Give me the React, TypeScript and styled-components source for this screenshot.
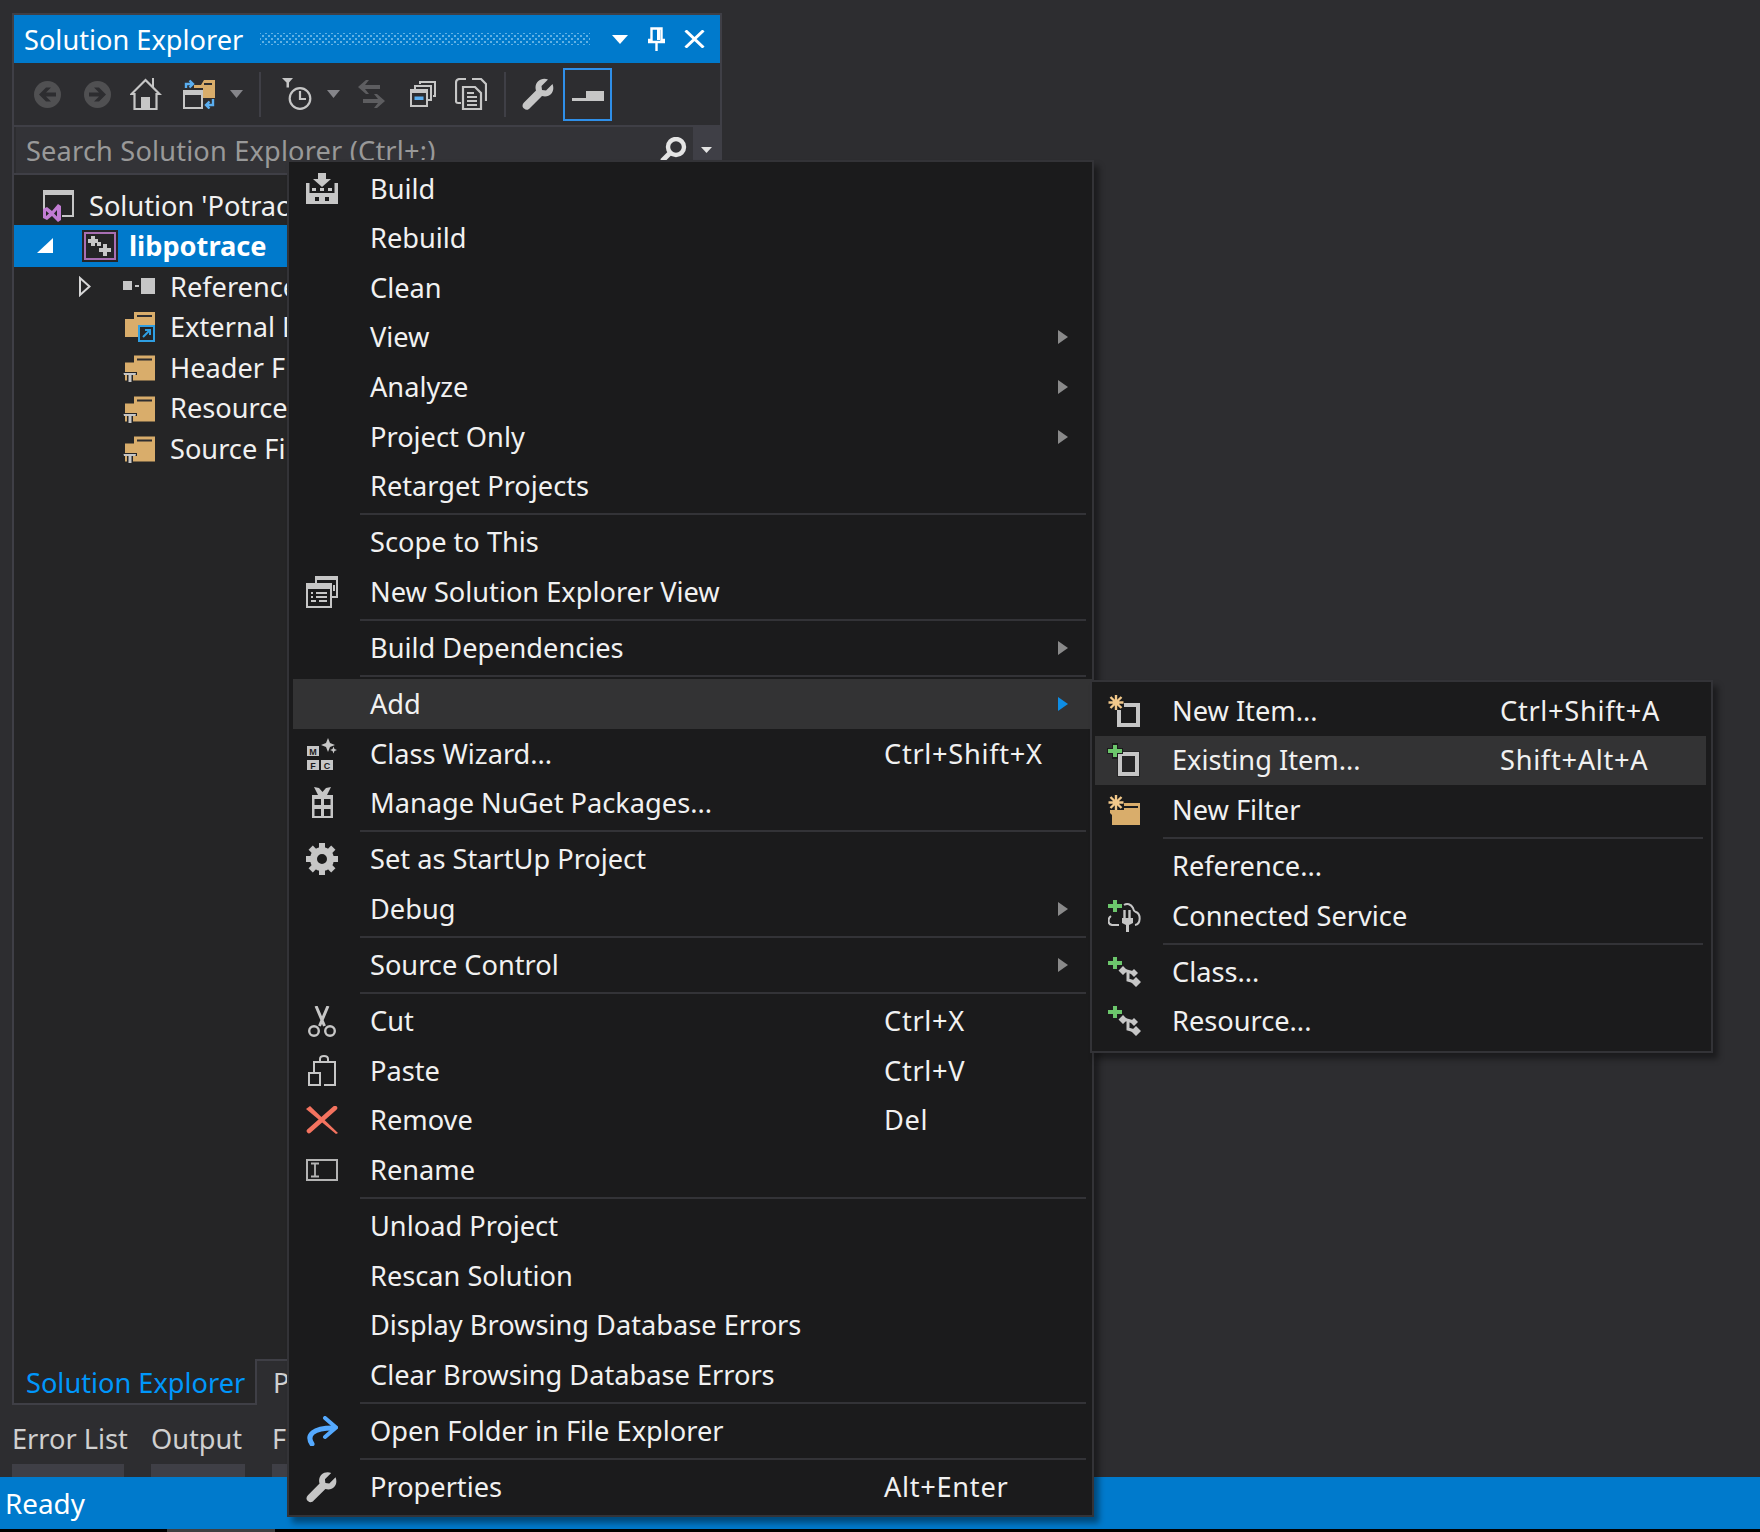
import React from "react";
import styled, { createGlobalStyle } from "styled-components";

const FONT = `"Noto Sans", "Open Sans", "Liberation Sans", sans-serif`;
const GRAY = "#c6c6c6";
const DARK = "#1b1b1c";
const FOLDER = "#d9ad6b";
const GREEN = "#6cc66c";
const STAR = "#f3c98b";

const Global = createGlobalStyle`
  html, body { margin: 0; padding: 0; background: #2d2d30; }
  * { box-sizing: border-box; }
`;

const Page = styled.div`
  position: relative;
  width: 1760px;
  height: 1532px;
  display: flex;
  flex-direction: column;
  padding-top: 13px;
  overflow: hidden;
  background: #2d2d30;
  font-family: ${FONT};
  font-size: 27.2px;
  color: #f1f1f1;
`;

const Panel = styled.section`
  width: 710px;
  height: 1348px;
  margin-left: 12px;
  display: flex;
  flex-direction: column;
  border: 2px solid #3f3f46;
  border-bottom: none;
  background: #2d2d30;
`;

const TitleBar = styled.header`
  height: 48px;
  flex: none;
  display: flex;
  align-items: center;
  padding-left: 10px;
  background: #007acc;
  color: #ffffff;
`;

const TitleText = styled.span`
  width: 219px;
  flex: none;
  line-height: 49px;
  white-space: nowrap;
`;

const Grip = styled.div`
  width: 330px;
  height: 12px;
  margin-left: 17px;
  background-image:
    radial-gradient(circle, #62b1e4 1px, transparent 1.3px),
    radial-gradient(circle, #62b1e4 1px, transparent 1.3px);
  background-size: 6px 6px;
  background-position: 0 0, 3px 3px;
`;

const Glyph = styled.svg<{ $ml?: number }>`
  display: block;
  flex: none;
  margin-left: ${(p) => p.$ml ?? 0}px;
`;

const Toolbar = styled.div`
  height: 62px;
  flex: none;
  display: flex;
  align-items: center;
  padding-left: 20px;
`;

const ToolSep = styled.div<{ $ml: number }>`
  width: 2px;
  height: 45px;
  margin-left: ${(p) => p.$ml}px;
  background: #3f3f46;
`;

const ActiveTool = styled.div`
  width: 49px;
  height: 53px;
  margin-left: 8px;
  display: flex;
  align-items: center;
  justify-content: center;
  padding-top: 3px;
  border: 2px solid #2f8fe8;
`;

const SearchRow = styled.div`
  height: 50px;
  flex: none;
  display: flex;
  border-top: 2px solid #3f3f46;
  border-bottom: 2px solid #3f3f46;
`;

const SearchField = styled.div`
  flex: 1;
  display: flex;
  align-items: center;
  justify-content: space-between;
  padding: 0 5px 0 10px;
  margin-left: 2px;
  background: #333337;
  color: #999999;
  letter-spacing: 0.17px;
  white-space: nowrap;
`;

const SearchDrop = styled.div`
  width: 27px;
  display: flex;
  justify-content: center;
  padding-top: 20px;
  background: #3f3f46;
`;

const Tree = styled.div`
  flex: 1;
  padding-top: 10px;
  background: #252526;
  border-bottom: 2px solid #3f3f46;
`;

const TreeRow = styled.div<{ $indent: number; $selected?: boolean }>`
  height: ${(p) => (p.$selected ? 42.5 : 40.5)}px;
  margin: ${(p) => (p.$selected ? "-1px 0" : "0")};
  display: flex;
  align-items: center;
  padding-left: ${(p) => p.$indent}px;
  background: ${(p) => (p.$selected ? "#007acc" : "transparent")};
  color: ${(p) => (p.$selected ? "#ffffff" : "#f1f1f1")};
  font-weight: ${(p) => (p.$selected ? 700 : 400)};
`;

const TreeLabel = styled.span`
  white-space: nowrap;
`;

const Expander = styled.div`
  width: 45px;
  flex: none;
`;

const TreeIcon = styled.div`
  width: 36px;
  flex: none;
  margin-right: 11px;
`;

const TabStrip = styled.div`
  height: 46px;
  flex: none;
  display: flex;
  margin-left: 12px;
`;

const ActiveTab = styled.div`
  width: 245px;
  height: 46px;
  margin-top: -2px;
  padding-left: 12px;
  line-height: 47px;
  background: #252526;
  color: #0097fb;
  border: 2px solid #3f3f46;
  border-top: none;
  white-space: nowrap;
`;

const IdleTab = styled.div`
  padding-left: 16px;
  line-height: 44px;
  color: #d0d0d0;
`;

const ToolTabs = styled.nav`
  height: 70px;
  flex: none;
  display: flex;
  gap: 27px;
  padding-left: 12px;
`;

const ToolTab = styled.div<{ $w: number }>`
  width: ${(p) => p.$w}px;
  display: flex;
  flex-direction: column;
  justify-content: flex-end;
  color: #d0d0d0;
  white-space: nowrap;
  line-height: 34px;
  &::after {
    content: "";
    display: block;
    height: 13px;
    margin-top: 8px;
    background: #3f3f46;
  }
`;

const StatusBar = styled.footer`
  height: 52px;
  flex: none;
  padding-left: 5px;
  line-height: 52px;
  font-size: 27.8px;
  background: #007acc;
  color: #ffffff;
`;

const BottomEdge = styled.div`
  height: 3px;
  flex: none;
  padding-left: 167px;
  background: #000000;
  &::before {
    content: "";
    display: block;
    width: 108px;
    height: 3px;
    background: #3f3f40;
  }
`;

const Menu = styled.div<{ $left: number; $top: number; $width: number; $pad: string; $z: number }>`
  position: absolute;
  left: ${(p) => p.$left}px;
  top: ${(p) => p.$top}px;
  width: ${(p) => p.$width}px;
  z-index: ${(p) => p.$z};
  padding: ${(p) => p.$pad};
  background: ${DARK};
  border: 2px solid #333337;
  box-shadow: 5px 6px 6px rgba(0, 0, 0, 0.4);
`;

const Row = styled.div<{ $textW: number; $active?: boolean }>`
  display: grid;
  grid-template-columns: 58px 19px ${(p) => p.$textW}px 1fr;
  height: 49.57px;
  padding-bottom: 1px;
  align-items: center;
  background: ${(p) => (p.$active ? "#333334" : "transparent")};
  white-space: nowrap;
`;

const RowIcon = styled.div`
  grid-column: 1;
  display: flex;
  justify-content: center;
  margin-top: 1px;
`;

const RowLabel = styled.span`
  grid-column: 3;
`;

const RowShortcut = styled.span`
  grid-column: 4;
  letter-spacing: 0.7px;
`;

const SubArrow = styled.span<{ $on?: boolean }>`
  grid-column: 4;
  justify-self: end;
  width: 0;
  height: 0;
  margin: 1px 24px 0 0;
  border-top: 7.5px solid transparent;
  border-bottom: 7.5px solid transparent;
  border-left: 10px solid ${(p) => (p.$on ? "#0e8de4" : "#8a8a8a")};
`;

const Separator = styled.div<{ $l: number; $r: number }>`
  height: 2px;
  margin: 2.3px ${(p) => p.$r}px 2.3px ${(p) => p.$l}px;
  background: #333337;
`;

/* ---------- toolbar drawings ---------- */
const NavCircle = ({ dir, ml }: { dir: "l" | "r"; ml?: number }) => (
  <Glyph $ml={ml} width={27} height={27} viewBox="0 0 27 27">
    <circle cx="13.5" cy="13.5" r="13.5" fill="#505052" />
    <path
      transform={dir === "r" ? "rotate(180 13.5 13.5)" : undefined}
      d="M5 13.5 L12 6.5 h5 l-5 5 h10 v4 h-10 l5 5 h-5z"
      fill="#2d2d30"
    />
  </Glyph>
);

const HomeTool = ({ ml }: { ml: number }) => (
  <Glyph $ml={ml} width={32} height={32} viewBox="0 0 32 32">
    <path d="M15.5 2 L29.5 16 H26.5 V31 H4.5 V16 H1.5 Z" fill="none" stroke={GRAY} strokeWidth="2.2" />
    <path d="M23 10 V0" stroke={GRAY} strokeWidth="2" />
    <rect x="11" y="19" width="9" height="12" fill={GRAY} />
  </Glyph>
);

const SyncTool = ({ ml }: { ml: number }) => (
  <Glyph $ml={ml} width={32} height={30} viewBox="0 0 32 30">
    <path d="M11 6 H18 L21 1 H32 V19 H20 V9 H11 Z" fill={FOLDER} />
    <rect x="21" y="4" width="8" height="2" fill="#2d2d30" />
    <rect x="1" y="12" width="18" height="17" fill="#2d2d30" stroke={GRAY} strokeWidth="2" />
    <rect x="0" y="11" width="20" height="5" fill={GRAY} />
    <path d="M3 9 V5 H9 M6.5 1.5 L10 5 L6.5 8.5" fill="none" stroke="#5aaef0" strokeWidth="2.4" />
    <path d="M30 20 V26 H24 M26.5 22.5 L23 26 L26.5 29.5" fill="none" stroke="#5aaef0" strokeWidth="2.4" />
  </Glyph>
);

const DropTool = ({ ml }: { ml: number }) => (
  <Glyph $ml={ml} width={13} height={8} viewBox="0 0 13 8">
    <path d="M0 0 H13 L6.5 8 Z" fill="#85858a" />
  </Glyph>
);

const HistoryTool = ({ ml }: { ml: number }) => (
  <Glyph $ml={ml} width={30} height={32} viewBox="0 0 30 32">
    <path d="M0 0 H11 L7 4.5 V9.5 H4.5 V4.5 Z" fill={GRAY} />
    <circle cx="18" cy="20.5" r="10.3" fill="none" stroke={GRAY} strokeWidth="2.2" />
    <path d="M18 13 V21 H24" fill="none" stroke={GRAY} strokeWidth="2.2" />
  </Glyph>
);

const SwapTool = ({ ml }: { ml: number }) => (
  <Glyph $ml={ml} width={27} height={28} viewBox="0 0 27 28">
    <path d="M0 7 L8 0 h3 L7 5 H22 V9 H7 L11 14 H8 Z" fill="#5d5d60" />
    <path d="M27 21 L19 14 h-3 L20 19 H5 V23 H20 L16 28 H19 Z" fill="#5d5d60" />
  </Glyph>
);

const CollapseTool = ({ ml }: { ml: number }) => (
  <Glyph $ml={ml} width={26} height={26} viewBox="0 0 26 26">
    <path d="M10 3 V1 H25 V15 H23" fill="none" stroke={GRAY} strokeWidth="2" />
    <path d="M5 8 V5 H21 V19 H18" fill="none" stroke={GRAY} strokeWidth="2" />
    <rect x="1" y="9" width="16" height="16" fill="#2d2d30" stroke={GRAY} strokeWidth="2" />
    <rect x="0" y="8" width="18" height="4" fill={GRAY} />
    <rect x="4.5" y="15.5" width="9" height="3.5" fill="#5aaef0" />
  </Glyph>
);

const CopyTool = ({ ml }: { ml: number }) => (
  <Glyph $ml={ml} width={32} height={32} viewBox="0 0 32 32">
    <path d="M6 25 H3 Q1 25 1 23 V5 Q1 1 5 1 H11 M17 1 H26 L31 6 V23" fill="none" stroke={GRAY} strokeWidth="2.2" />
    <path d="M8 9 H20 L26 15 V31 H8 Z" fill="#2d2d30" stroke={GRAY} strokeWidth="2.2" />
    <path d="M12 15 H19 M12 19 H22 M12 23 H22 M12 27 H22" stroke={GRAY} strokeWidth="2" />
  </Glyph>
);

const WRENCH =
  "M30.5 6 L24 12.5 L20 12 L19.5 8 L26 1.5 C20 -1 13.5 3 13.5 9.5 C13.5 10.5 13.7 11.5 14 12.5 L2 24.5 C0 26.5 0 29 2 30.5 C4 32.5 6.5 32 8 30 L20 18 C21 18.3 22 18.5 23 18.5 C29.5 18.5 33 12 30.5 6 Z";

const WrenchTool = ({ ml }: { ml: number }) => (
  <Glyph $ml={ml} width={33} height={32} viewBox="0 0 33 32">
    <path d={WRENCH} fill={GRAY} />
  </Glyph>
);

const PinTool = () => (
  <Glyph width={32} height={10} viewBox="0 0 32 10">
    <rect x="0" y="7" width="15" height="3" fill={GRAY} />
    <rect x="14" y="0" width="18" height="10" fill={GRAY} />
  </Glyph>
);

/* ---------- title bar / search ---------- */
const TitleDrop = () => (
  <Glyph $ml={22} width={16} height={9} viewBox="0 0 16 9">
    <path d="M0 0 H16 L8 9 Z" fill="#ffffff" />
  </Glyph>
);

const TitlePin = () => (
  <Glyph $ml={20} width={17} height={24} viewBox="0 0 17 24">
    <path d="M3.5 1.5 H13.5 V13 H16 V15 H1 V13 H3.5 Z" fill="none" stroke="#fff" strokeWidth="2.4" />
    <path d="M8.5 15 V24" stroke="#fff" strokeWidth="2.4" />
    <rect x="9" y="2" width="3" height="11" fill="#fff" />
  </Glyph>
);

const TitleClose = () => (
  <Glyph $ml={19} width={21} height={18} viewBox="0 0 21 18">
    <path d="M1.5 0.5 L19.5 17.5 M19.5 0.5 L1.5 17.5" stroke="#fff" strokeWidth="3" />
  </Glyph>
);

const SearchGlass = () => (
  <Glyph width={28} height={26} viewBox="0 0 28 26">
    <circle cx="16" cy="10" r="8" fill="none" stroke="#e4e4e4" strokeWidth="4.4" />
    <path d="M10 16 L2 24" stroke="#e4e4e4" strokeWidth="5" />
  </Glyph>
);

const SearchArrow = () => (
  <Glyph width={11} height={6} viewBox="0 0 11 6">
    <path d="M0 0 H11 L5.5 6 Z" fill="#e4e4e4" />
  </Glyph>
);

/* ---------- tree drawings ---------- */
const SolutionIcon = () => (
  <Glyph width={33} height={33} viewBox="0 0 33 33">
    <path d="M2 20 V2 H31 V27 H20" fill="none" stroke={GRAY} strokeWidth="2" />
    <rect x="1" y="1" width="31" height="5" fill={GRAY} />
    <path
      d="M1 20 L5 18 L10 22 L16 15 L19 17 V31 L16 33 L10 27 L5 31 L1 29 Z M4 22 V27 L7 24.5 Z M15 21 L12 24.5 L15 27.5 Z"
      fill="#c27dd4"
      fillRule="evenodd"
    />
  </Glyph>
);

const ProjectIcon = () => (
  <Glyph width={36} height={32} viewBox="0 0 36 32">
    <rect width="36" height="32" fill="#252526" />
    <rect x="3" y="3" width="30" height="26" fill="none" stroke="#a86fb3" strokeWidth="2" />
    <path
      d="M9 6 h4 v3 h3 v4 h-3 v3 h-4 v-3 h-3 v-4 h3z M21 14 h4 v4 h4 v4 h-4 v4 h-4 v-4 h-4 v-4 h4z"
      fill="#c8c8c8"
    />
    <rect x="15" y="12" width="4" height="4" fill="#c8c8c8" />
  </Glyph>
);

const SolidExpander = () => (
  <Glyph width={16} height={15} viewBox="0 0 16 15">
    <path d="M16 0 V15 H0 Z" fill="#ffffff" />
  </Glyph>
);

const OpenExpander = () => (
  <Glyph $ml={1} width={12} height={21} viewBox="0 0 12 21">
    <path d="M1 2 L10.5 10.5 L1 19 Z" fill="none" stroke="#d6d6d6" strokeWidth="2" />
  </Glyph>
);

const ReferenceIcon = () => (
  <Glyph width={32} height={16} viewBox="0 0 32 16">
    <rect x="0" y="3" width="9" height="9" fill={GRAY} />
    <rect x="12" y="7" width="4" height="2" fill={GRAY} />
    <rect x="18" y="0" width="14" height="16" fill={GRAY} />
  </Glyph>
);

const FolderShape = () => (
  <>
    <path d="M0 7 H9 V0 H30 V25 H0 Z" fill={FOLDER} />
    <rect x="12" y="3" width="15" height="2" fill="#2d2d30" />
  </>
);

const ExternalIcon = () => (
  <Glyph $ml={2} width={30} height={30} viewBox="0 0 30 30">
    <FolderShape />
    <rect x="14" y="14" width="15" height="15" fill="#252526" stroke="#2f9fe2" strokeWidth="2" />
    <path d="M18 25 L25 18 M20 18 H25 V23" fill="none" stroke="#2f9fe2" strokeWidth="2" />
  </Glyph>
);

const FilterFolderIcon = () => (
  <Glyph width={32} height={32} viewBox="0 0 32 32">
    <g transform="translate(2 4.5)">
      <FolderShape />
    </g>
    <path d="M0 21 H14 V24 H10 V32 H4 V24 H0 Z" fill="#252526" />
    <path d="M0.5 22 H13 L12.5 24 H8.5 V31 H5.5 V24 H1 Z" fill={GRAY} />
  </Glyph>
);

/* ---------- menu drawings ---------- */
const BuildIcon = () => (
  <Glyph width={32} height={31} viewBox="0 0 32 31">
    <path d="M12 0 H20 V6 H25 L16 14 L7 6 H12 Z" fill={GRAY} />
    <rect x="0" y="10" width="3.5" height="12" fill={GRAY} />
    <rect x="28.5" y="10" width="3.5" height="12" fill={GRAY} />
    <rect x="6" y="15" width="4" height="3" fill={GRAY} />
    <rect x="14" y="15" width="4" height="3" fill={GRAY} />
    <rect x="22" y="15" width="4" height="3" fill={GRAY} />
    <path d="M0 20 H32 V31 H0 Z M9 24 V28 H13 V24 Z M19 24 V28 H23 V24 Z" fill={GRAY} fillRule="evenodd" />
  </Glyph>
);

const NewViewIcon = () => (
  <Glyph width={32} height={32} viewBox="0 0 32 32">
    <path d="M10 7 V1 H31 V21 H26" fill="none" stroke={GRAY} strokeWidth="2" />
    <rect x="10" y="1" width="21" height="3" fill={GRAY} />
    <path d="M27 9 H29 V15 H27 Z" fill={GRAY} />
    <rect x="1" y="8" width="24" height="23" fill={DARK} stroke={GRAY} strokeWidth="2" />
    <rect x="0" y="8" width="26" height="5" fill={GRAY} />
    <path d="M5 17 H7 M10 17 H21 M5 21 H7 M10 21 H21 M5 25 H10 M13 25 H21" stroke={GRAY} strokeWidth="2" />
  </Glyph>
);

const WizardLetter = styled.text`
  font-family: "Liberation Sans", sans-serif;
  font-size: 9px;
  font-weight: 700;
  fill: ${DARK};
  text-anchor: middle;
`;

const ClassWizardIcon = () => (
  <Glyph width={30} height={32} viewBox="0 0 30 32">
    <path d="M21 0 L23 5 L28 7 L23 9 L21 14 L19 9 L14 7 L19 5 Z" fill={GRAY} />
    <path d="M26.5 8.5 L27.5 11 L30 12 L27.5 13 L26.5 15.5 L25.5 13 L23 12 L25.5 11 Z" fill={GRAY} />
    <rect x="0" y="8" width="12" height="10" fill={GRAY} />
    <WizardLetter x="6" y="16.5">M</WizardLetter>
    <rect x="0" y="22" width="12" height="10" fill={GRAY} />
    <WizardLetter x="6" y="30.5">F</WizardLetter>
    <rect x="14" y="22" width="12" height="10" fill={GRAY} />
    <WizardLetter x="20" y="30.5">C</WizardLetter>
  </Glyph>
);

const NuGetIcon = () => (
  <Glyph width={23} height={32} viewBox="0 0 23 32">
    <path d="M3 0 L8 1 L11.5 5 L15 1 L20 0 L16 8 H7 Z" fill={GRAY} />
    <path d="M1 8 H22 V31 H1 Z" fill={GRAY} />
    <rect x="3.5" y="12" width="6.5" height="6" fill={DARK} />
    <rect x="13" y="12" width="6.5" height="6" fill={DARK} />
    <rect x="3.5" y="22" width="6.5" height="7" fill={DARK} />
    <rect x="13" y="22" width="6.5" height="7" fill={DARK} />
  </Glyph>
);

const GearIcon = () => (
  <Glyph width={32} height={32} viewBox="0 0 32 32">
    {[0, 45, 90, 135, 180, 225, 270, 315].map((a) => (
      <rect key={a} x="13" y="0" width="6" height="8" fill={GRAY} transform={`rotate(${a} 16 16)`} />
    ))}
    <circle cx="16" cy="16" r="8.5" fill="none" stroke={GRAY} strokeWidth="7" />
  </Glyph>
);

const CutIcon = () => (
  <Glyph width={28} height={31} viewBox="0 0 28 31">
    <path d="M8 0 L16.5 20 M20 0 L11.5 20" stroke={GRAY} strokeWidth="3" fill="none" />
    <circle cx="6" cy="25" r="4.8" fill="none" stroke={GRAY} strokeWidth="2.4" />
    <circle cx="22" cy="25" r="4.8" fill="none" stroke={GRAY} strokeWidth="2.4" />
  </Glyph>
);

const PasteIcon = () => (
  <Glyph width={28} height={31} viewBox="0 0 28 31">
    <path d="M6 18 V7 H27 V30 H16" fill="none" stroke={GRAY} strokeWidth="2" />
    <path d="M12 7 V4 Q12 1 16 1 Q20 1 20 4 V7" fill="none" stroke={GRAY} strokeWidth="2" />
    <rect x="1" y="18" width="11" height="12" fill={DARK} stroke={GRAY} strokeWidth="2" />
  </Glyph>
);

const RemoveIcon = () => (
  <Glyph width={32} height={28} viewBox="0 0 32 28">
    <path d="M29 2 L3 25" stroke="#f4735f" strokeWidth="4.6" strokeLinecap="round" />
    <path d="M0 3 L4 0 L32 27 L30 28 Z" fill="#f4735f" />
  </Glyph>
);

const RenameIcon = () => (
  <Glyph width={32} height={22} viewBox="0 0 32 22">
    <rect x="1" y="1" width="30" height="20" fill="none" stroke="#b4b4b4" strokeWidth="2" />
    <path d="M5 4.5 H13 M5 17.5 H13 M9 4.5 V17.5" stroke="#b4b4b4" strokeWidth="1.8" />
  </Glyph>
);

const OpenFolderIcon = () => (
  <Glyph width={32} height={30} viewBox="0 0 32 30">
    <path d="M6 28 C0 19 7 12 27 12" fill="none" stroke="#55aaff" strokeWidth="5" strokeLinecap="round" />
    <path d="M19 2 L30 11.5 L19 21" fill="none" stroke="#55aaff" strokeWidth="4" strokeLinecap="round" />
  </Glyph>
);

const PropertiesIcon = () => (
  <Glyph width={32} height={32} viewBox="0 0 33 32">
    <path d={WRENCH} fill={GRAY} />
  </Glyph>
);

/* ---------- submenu drawings ---------- */
const Asterisk = () => (
  <g stroke={STAR} strokeWidth="2.4">
    <path d="M8 0 V15 M0.5 7.5 H15.5 M2.5 2 L13.5 13 M13.5 2 L2.5 13" />
  </g>
);

const Plus = ({ halo }: { halo?: boolean }) => (
  <>
    {halo && <path d="M4 -2 H10 V3 H15 V9 H10 V14 H4 V9 H-1 V3 H4 Z" fill="#1b1b1c" />}
    <path d="M5 0 H9 V4 H14 V8 H9 V12 H5 V8 H0 V4 H5 Z" fill={GREEN} />
  </>
);

const NewItemIcon = () => (
  <Glyph width={32} height={32} viewBox="0 0 32 32" style={{ overflow: "visible" }}>
    <rect x="11" y="10" width="19" height="20" fill="none" stroke={GRAY} strokeWidth="4" />
    <rect x="0" y="0" width="16" height="15" fill={DARK} />
    <Asterisk />
  </Glyph>
);

const ExistingItemIcon = () => (
  <Glyph width={34} height={36} viewBox="0 0 34 36" style={{ overflow: "visible" }}>
    <rect x="10" y="9" width="23" height="26" fill="#252526" />
    <rect x="13" y="12" width="17" height="20" fill="none" stroke={GRAY} strokeWidth="4" />
    <g transform="translate(1 3)">
      <Plus halo />
    </g>
  </Glyph>
);

const NewFilterIcon = () => (
  <Glyph width={32} height={30} viewBox="0 0 32 30">
    <path d="M2 12 H12 V8 H32 V30 H4 V20 L2 18 Z" fill={FOLDER} />
    <rect x="16" y="11" width="14" height="2" fill={DARK} />
    <rect x="0" y="0" width="16" height="15" fill={DARK} />
    <Asterisk />
  </Glyph>
);

const ConnectedIcon = () => (
  <Glyph width={33} height={32} viewBox="0 0 33 32">
    <path
      d="M3 16 C0 18 -1 24 4 25 H11 M16 5 C19 3 23 4 25 8 C26 11 26 11 28 12 C33 14 33 24 27 25"
      fill="none"
      stroke={GRAY}
      strokeWidth="2"
    />
    <path d="M16.5 10 V18 M21.5 10 V18" stroke={GRAY} strokeWidth="2.4" />
    <path d="M14 18 H25 V23 L21 25 V32 H18 V25 L14 23 Z" fill={GRAY} />
    <Plus />
  </Glyph>
);

const ClassItemIcon = () => (
  <Glyph width={33} height={30} viewBox="0 0 33 30">
    <Plus />
    <path d="M15 13 L26 16 M20 15 V23 L27 25" fill="none" stroke={GRAY} strokeWidth="3" />
    <path d="M15 9 L19.5 13.5 L15 18 L10.5 13.5 Z M26 12 L30 16 L26 20 L22 16 Z M28 20 L33 25 L28 30 L23 25 Z" fill={GRAY} />
  </Glyph>
);

/* ---------- data ---------- */
type Item = {
  label?: string;
  shortcut?: string;
  Icon?: React.FC;
  arrow?: boolean;
  active?: boolean;
  sep?: boolean;
};

const mainItems: Item[] = [
  { label: "Build", Icon: BuildIcon },
  { label: "Rebuild" },
  { label: "Clean" },
  { label: "View", arrow: true },
  { label: "Analyze", arrow: true },
  { label: "Project Only", arrow: true },
  { label: "Retarget Projects" },
  { sep: true },
  { label: "Scope to This" },
  { label: "New Solution Explorer View", Icon: NewViewIcon },
  { sep: true },
  { label: "Build Dependencies", arrow: true },
  { sep: true },
  { label: "Add", arrow: true, active: true },
  { label: "Class Wizard...", shortcut: "Ctrl+Shift+X", Icon: ClassWizardIcon },
  { label: "Manage NuGet Packages...", Icon: NuGetIcon },
  { sep: true },
  { label: "Set as StartUp Project", Icon: GearIcon },
  { label: "Debug", arrow: true },
  { sep: true },
  { label: "Source Control", arrow: true },
  { sep: true },
  { label: "Cut", shortcut: "Ctrl+X", Icon: CutIcon },
  { label: "Paste", shortcut: "Ctrl+V", Icon: PasteIcon },
  { label: "Remove", shortcut: "Del", Icon: RemoveIcon },
  { label: "Rename", Icon: RenameIcon },
  { sep: true },
  { label: "Unload Project" },
  { label: "Rescan Solution" },
  { label: "Display Browsing Database Errors" },
  { label: "Clear Browsing Database Errors" },
  { sep: true },
  { label: "Open Folder in File Explorer", Icon: OpenFolderIcon },
  { sep: true },
  { label: "Properties", shortcut: "Alt+Enter", Icon: PropertiesIcon },
];

const subItems: Item[] = [
  { label: "New Item...", shortcut: "Ctrl+Shift+A", Icon: NewItemIcon },
  { label: "Existing Item...", shortcut: "Shift+Alt+A", Icon: ExistingItemIcon, active: true },
  { label: "New Filter", Icon: NewFilterIcon },
  { sep: true },
  { label: "Reference..." },
  { label: "Connected Service", Icon: ConnectedIcon },
  { sep: true },
  { label: "Class...", Icon: ClassItemIcon },
  { label: "Resource...", Icon: ClassItemIcon },
];

const MenuRows = ({ items, textW, sepL, sepR }: { items: Item[]; textW: number; sepL: number; sepR: number }) => (
  <>
    {items.map((it, i) =>
      it.sep ? (
        <Separator key={i} $l={sepL} $r={sepR} />
      ) : (
        <Row key={i} $textW={textW} $active={it.active}>
          {it.Icon && (
            <RowIcon>
              <it.Icon />
            </RowIcon>
          )}
          <RowLabel>{it.label}</RowLabel>
          {it.shortcut && <RowShortcut>{it.shortcut}</RowShortcut>}
          {it.arrow && <SubArrow $on={it.active} />}
        </Row>
      )
    )}
  </>
);

export default function App() {
  return (
    <Page>
      <Global />
      <Panel>
        <TitleBar>
          <TitleText>Solution Explorer</TitleText>
          <Grip />
          <TitleDrop />
          <TitlePin />
          <TitleClose />
        </TitleBar>
        <Toolbar>
          <NavCircle dir="l" />
          <NavCircle dir="r" ml={23} />
          <HomeTool ml={19} />
          <SyncTool ml={21} />
          <DropTool ml={15} />
          <ToolSep $ml={16} />
          <HistoryTool ml={21} />
          <DropTool ml={15} />
          <SwapTool ml={18} />
          <CollapseTool ml={25} />
          <CopyTool ml={19} />
          <ToolSep $ml={17} />
          <WrenchTool ml={16} />
          <ActiveTool>
            <PinTool />
          </ActiveTool>
        </Toolbar>
        <SearchRow>
          <SearchField>
            <span>Search Solution Explorer (Ctrl+;)</span>
            <SearchGlass />
          </SearchField>
          <SearchDrop>
            <SearchArrow />
          </SearchDrop>
        </SearchRow>
        <Tree>
          <TreeRow $indent={28}>
            <TreeIcon>
              <SolutionIcon />
            </TreeIcon>
            <TreeLabel>Solution 'Potrac</TreeLabel>
          </TreeRow>
          <TreeRow $indent={23} $selected>
            <Expander>
              <SolidExpander />
            </Expander>
            <TreeIcon>
              <ProjectIcon />
            </TreeIcon>
            <TreeLabel>libpotrace</TreeLabel>
          </TreeRow>
          <TreeRow $indent={64}>
            <Expander>
              <OpenExpander />
            </Expander>
            <TreeIcon>
              <ReferenceIcon />
            </TreeIcon>
            <TreeLabel>Reference</TreeLabel>
          </TreeRow>
          <TreeRow $indent={64}>
            <Expander />
            <TreeIcon>
              <ExternalIcon />
            </TreeIcon>
            <TreeLabel>External D</TreeLabel>
          </TreeRow>
          <TreeRow $indent={64}>
            <Expander />
            <TreeIcon>
              <FilterFolderIcon />
            </TreeIcon>
            <TreeLabel>Header F</TreeLabel>
          </TreeRow>
          <TreeRow $indent={64}>
            <Expander />
            <TreeIcon>
              <FilterFolderIcon />
            </TreeIcon>
            <TreeLabel>Resource</TreeLabel>
          </TreeRow>
          <TreeRow $indent={64}>
            <Expander />
            <TreeIcon>
              <FilterFolderIcon />
            </TreeIcon>
            <TreeLabel>Source Fi</TreeLabel>
          </TreeRow>
        </Tree>
      </Panel>
      <TabStrip>
        <ActiveTab>Solution Explorer</ActiveTab>
        <IdleTab>P</IdleTab>
      </TabStrip>
      <ToolTabs>
        <ToolTab $w={112}>Error List</ToolTab>
        <ToolTab $w={94}>Output</ToolTab>
        <ToolTab $w={15}>F</ToolTab>
      </ToolTabs>
      <StatusBar>Ready</StatusBar>
      <BottomEdge />

      <Menu $left={287} $top={160} $width={807} $pad="2px 0 3px 4px" $z={2}>
        <MenuRows items={mainItems} textW={514} sepL={67} sepR={6} />
      </Menu>
      <Menu $left={1090} $top={680} $width={623} $pad="4px 5px 5px 3px" $z={3}>
        <MenuRows items={subItems} textW={328} sepL={68} sepR={3} />
      </Menu>
    </Page>
  );
}
